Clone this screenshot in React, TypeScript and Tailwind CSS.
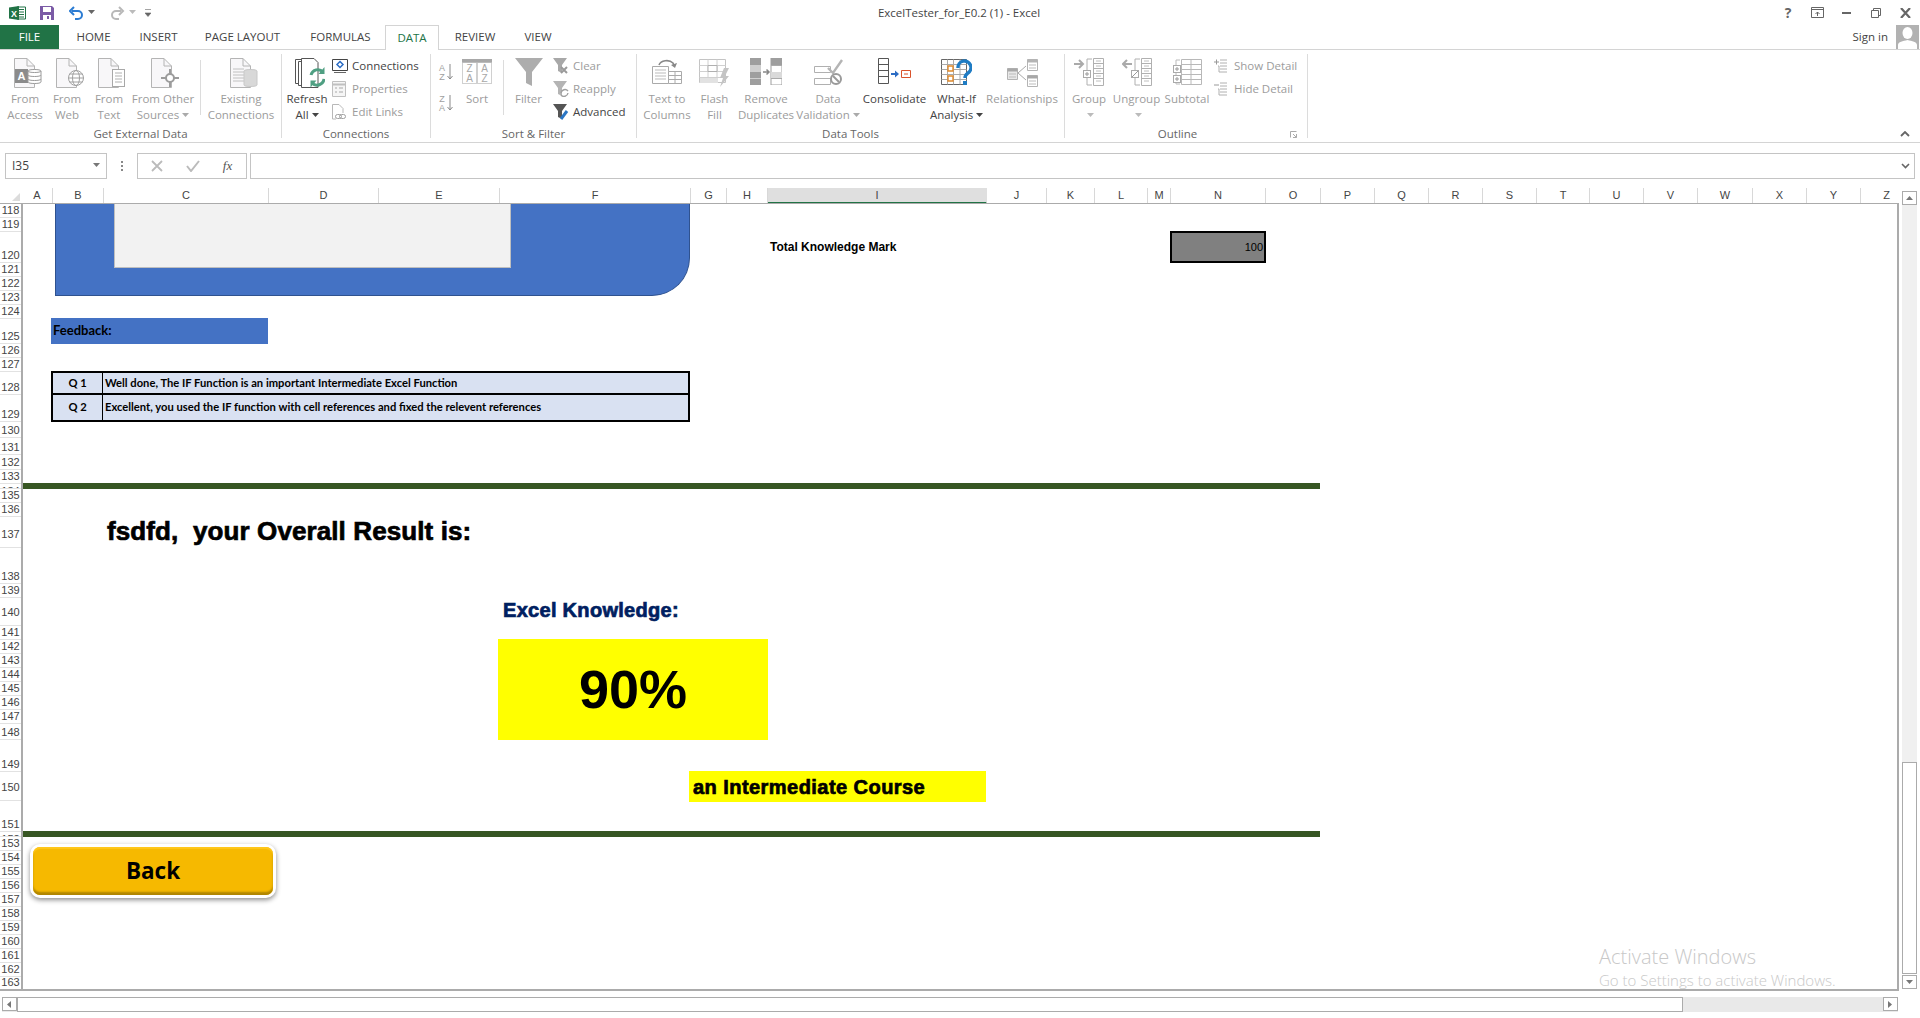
import React from "react";

const ui = "font-['Open_Sans',sans-serif]";
const G = "#b4b4b4";

function Caret({ c = "#8a8a8a" }: { c?: string }) {
  return (
    <svg width="7" height="4" viewBox="0 0 7 4" className="inline-block ml-[3px] mb-[2px]">
      <path d="M0 0h7L3.5 4z" fill={c} />
    </svg>
  );
}

function DocBase({ fill = "#f8f7f9", s = G }: { fill?: string; s?: string }) {
  return (
    <>
      <path d="M.5.5H13L20.5 8V29.5H.5z" fill={fill} stroke={s} />
      <path d="M13 .5V8h7.5" fill="none" stroke={s} />
    </>
  );
}

function FromAccess() {
  return (
    <svg width="28" height="30" viewBox="0 0 28 30" className="ml-[5px]">
      <DocBase />
      <rect x="1" y="11" width="13" height="14" fill="#8b8b8b" />
      <text x="7.5" y="22" textAnchor="middle" fontSize="11" fontWeight="700" fill="#fff" fontFamily="Liberation Sans">A</text>
      <path d="M14 13c0-2 13-2 13 0v11c0 2-13 2-13 0z" fill="#fff" stroke="#9a9a9a" />
      <path d="M14 13c0 2 13 2 13 0M14 17c0 2 13 2 13 0M14 21c0 2 13 2 13 0" fill="none" stroke="#9a9a9a" />
    </svg>
  );
}
function FromWeb() {
  return (
    <svg width="28" height="30" viewBox="0 0 28 30" className="ml-[5px]">
      <DocBase />
      <circle cx="20" cy="20" r="7.5" fill="#fff" stroke="#a0a0a0" />
      <ellipse cx="20" cy="20" rx="3.5" ry="7.5" fill="none" stroke="#a0a0a0" />
      <path d="M12.5 20h15M13.5 16h13M13.5 24h13" stroke="#a0a0a0" fill="none" />
    </svg>
  );
}
function FromText() {
  return (
    <svg width="28" height="30" viewBox="0 0 28 30" className="ml-[5px]">
      <DocBase />
      <rect x="14.5" y="11.5" width="12" height="17" fill="#fff" stroke="#a8a8a8" />
      <path d="M17 15h7M17 18h7M17 21h7M17 24h7" stroke="#b0b0b0" />
    </svg>
  );
}
function FromOther() {
  return (
    <svg width="28" height="30" viewBox="0 0 28 30" className="ml-[4px]">
      <DocBase />
      <circle cx="19" cy="20" r="4" fill="#fff" stroke="#9c9c9c" strokeWidth="2" />
      <path d="M19 11v5M19 24v5M10 20h5M23 20h5" stroke="#9c9c9c" strokeWidth="2" />
    </svg>
  );
}
function Existing() {
  return (
    <svg width="28" height="30" viewBox="0 0 28 30" className="ml-[6px]">
      <DocBase />
      <path d="M3 11h11M3 14h11M3 17h11M3 20h11M3 23h11" stroke="#c0c0c0" />
      <path d="M14 13c0-2 13-2 13 0v14c0 2-13 2-13 0z" fill="#d8d8d8" stroke="#c8c8c8" />
    </svg>
  );
}
function Refresh() {
  return (
    <svg width="30" height="30" viewBox="0 0 30 30" className="ml-[6px]">
      <path d="M.5 1.5h15v24H.5z" fill="#fff" stroke="#555" />
      <path d="M3.5 3.5h15v24h-15z" fill="#fff" stroke="#555" />
      <path d="M6.5.5H19l4 4V29.5H6.5z" fill="#fff" stroke="#555" />
      <path d="M16 17a7 7 0 0 1 12-3" fill="none" stroke="#4f9f82" strokeWidth="3" />
      <path d="M29.5 9v7h-6z" fill="#4f9f82" />
      <path d="M29 21a7 7 0 0 1-12 4" fill="none" stroke="#4f9f82" strokeWidth="3" />
      <path d="M15.5 29.5v-7h6z" fill="#4f9f82" />
    </svg>
  );
}
function ConnIcon() {
  return (
    <svg width="16" height="14" viewBox="0 0 16 14">
      <path d="M.5.5h15v11H.5z" fill="#fff" stroke="#444" />
      <path d="M2 13.5h12" stroke="#666" />
      <path d="M8 2.5l3 3-3 3-3-3z" fill="#fff" stroke="#2b6cc4" strokeWidth="1.5" />
    </svg>
  );
}
function PropIcon() {
  return (
    <svg width="14" height="16" viewBox="0 0 14 16">
      <path d="M.5.5h13v15H.5z" fill="#f6f6f6" stroke="#c0c0c0" />
      <path d="M.5 3.5h13" stroke="#c0c0c0" strokeWidth="2" />
      <path d="M3 7h2M3 11h2M7 7h4M7 11h4" stroke="#a8a8a8" />
    </svg>
  );
}
function LinkIcon() {
  return (
    <svg width="15" height="16" viewBox="0 0 15 16">
      <path d="M.5.5H7l4 4V9M.5.5V15H4" fill="#fff" stroke="#b8b8b8" />
      <rect x="3.5" y="10.5" width="6" height="4" rx="2" fill="none" stroke="#a0a0a0" />
      <rect x="7.5" y="10.5" width="6" height="4" rx="2" fill="none" stroke="#a0a0a0" />
    </svg>
  );
}
function SortSmall({ a, b }: { a: string; b: string }) {
  return (
    <svg width="16" height="18" viewBox="0 0 16 18">
      <text x="4" y="8" textAnchor="middle" fontSize="9" fill="#a0a0a0" fontFamily="Liberation Sans">{a}</text>
      <text x="4" y="17" textAnchor="middle" fontSize="9" fill="#a0a0a0" fontFamily="Liberation Sans">{b}</text>
      <path d="M12 1v15M9.5 13l2.5 3 2.5-3" fill="none" stroke="#8a8a8a" />
    </svg>
  );
}
function SortBig() {
  return (
    <svg width="30" height="25" viewBox="0 0 30 25" className="mt-[1px]">
      <rect width="30" height="25" fill="#d0d0d0" />
      <rect y="0" width="30" height="3.5" fill="#a8a8a8" />
      <rect x="1" y="4" width="13" height="20" fill="#fff" />
      <rect x="16" y="4" width="13" height="20" fill="#fff" />
      <text x="7.5" y="13" textAnchor="middle" fontSize="10" fill="#a8a8a8" fontFamily="Liberation Sans">Z</text>
      <text x="7.5" y="23" textAnchor="middle" fontSize="10" fill="#a8a8a8" fontFamily="Liberation Sans">A</text>
      <text x="22.5" y="13" textAnchor="middle" fontSize="10" fill="#a8a8a8" fontFamily="Liberation Sans">A</text>
      <text x="22.5" y="23" textAnchor="middle" fontSize="10" fill="#a8a8a8" fontFamily="Liberation Sans">Z</text>
    </svg>
  );
}
function Funnel() {
  return (
    <svg width="28" height="28" viewBox="0 0 28 28">
      <path d="M0 0h28L17 14v14l-6-3V14z" fill="#adadad" />
    </svg>
  );
}
function SmallFunnel({ c, kind }: { c: string; kind: string }) {
  return (
    <svg width="16" height="16" viewBox="0 0 16 16">
      <path d="M0 0h14L9 7v8l-4-2V7z" fill={c} />
      {kind === "x" && <path d="M8 9l6 6M14 9l-6 6" stroke="#9a9a9a" strokeWidth="2" />}
      {kind === "r" && <path d="M8 12a4 4 0 0 1 7-2M15 12a4 4 0 0 1-7 2" fill="none" stroke="#a0a0a0" strokeWidth="1.4" />}
      {kind === "p" && <path d="M8 15l6-8" stroke="#2b76c4" strokeWidth="3" />}
    </svg>
  );
}
function TextCols() {
  return (
    <svg width="30" height="26" viewBox="0 0 30 26">
      <path d="M.5 8.5h16v17H.5z" fill="#fff" stroke="#aaa" />
      <path d="M3 12h11M3 15h11M3 18h11M3 21h11" stroke="#bbb" />
      <path d="M16.5 13.5h13v12h-13z" fill="#fff" stroke="#aaa" />
      <path d="M16.5 17.5h13M16.5 21.5h13M23 13.5v12" stroke="#aaa" />
      <path d="M7 7a8 6 0 0 1 14-2l1 3" fill="none" stroke="#888" strokeWidth="1.6" />
      <path d="M19 7l4 3 2-5z" fill="#888" />
    </svg>
  );
}
function Flash() {
  return (
    <svg width="31" height="28" viewBox="0 0 31 28" className="mt-[1px]">
      <path d="M.5.5h26v23H.5z" fill="#fff" stroke="#c4c4c4" />
      <path d="M.5 6.5h26M.5 12.5h26M.5 18.5h26M9 .5v23M18 .5v23" stroke="#d0d0d0" />
      <path d="M9 6.5h9v6H9z" fill="#fff" stroke="#b0b0b0" />
      <path d="M1 19h18v5H1z" fill="#e2e2e2" />
      <path d="M25 9h5l-4 8h4l-9 11 3-9h-3z" fill="#c4c4c4" />
    </svg>
  );
}
function RemoveDup() {
  return (
    <svg width="32" height="27" viewBox="0 0 32 27">
      <rect x="0" y="0" width="11" height="27" fill="#9e9e9e" />
      <path d="M0 7h11v7H0zM0 20h11v1H0z" fill="#cfcfcf" />
      <rect x="21" y="0" width="11" height="27" fill="#fff" stroke="#9e9e9e" />
      <rect x="21" y="0" width="11" height="7" fill="#9e9e9e" />
      <path d="M21 14h11v6H21z" fill="#dadada" />
      <path d="M21 20.5h11M21 7.5h11" stroke="#aaa" />
      <path d="M13 14h6M16.5 11.5L19 14l-2.5 2.5" fill="none" stroke="#888" strokeWidth="1.5" />
    </svg>
  );
}
function Validation() {
  return (
    <svg width="29" height="26" viewBox="0 0 29 26" className="mt-[1px]">
      <path d="M.5 7.5h16v6H.5zM.5 19.5h16v6H.5z" fill="#fff" stroke="#b0b0b0" />
      <path d="M14 9l5 5L28 1" fill="none" stroke="#b4b4b4" strokeWidth="2.4" />
      <circle cx="22" cy="20" r="5" fill="#fff" stroke="#9a9a9a" strokeWidth="2" />
      <path d="M19 17l6 6" stroke="#9a9a9a" strokeWidth="2" />
    </svg>
  );
}
function Consolidate() {
  return (
    <svg width="33" height="26" viewBox="0 0 33 26">
      <path d="M.5.5h10v25H.5zM.5 6.5h10M.5 12.5h10M.5 18.5h10" fill="#fff" stroke="#555" />
      <path d="M13 16h5" stroke="#2b6cc4" strokeWidth="2" />
      <path d="M17 12.5l4 3.5-4 3.5z" fill="#2b6cc4" />
      <path d="M23.5 12.5h9v7h-9z" fill="#fff" stroke="#d9532c" />
      <path d="M26 16h4" stroke="#d9532c" />
    </svg>
  );
}
function WhatIf() {
  return (
    <svg width="31" height="30" viewBox="0 0 31 30" className="mt-[1px]">
      <path d="M.5.5h25v25H.5z" fill="#fff" stroke="#666" />
      <path d="M.5 5.5h25M.5 10.5h25M.5 15.5h25M.5 20.5h25M6.5.5v25M12.5.5v25M19 .5v25" stroke="#aaa" />
      <path d="M7 7h5v5H7zM7 17h5v5H7z" fill="#fff" stroke="#e08a2c" strokeWidth="1.4" />
      <path d="M17 9a6.5 6.5 0 1 1 10 5c-2 1.500-3 2-3 5" fill="none" stroke="#1f7cc4" strokeWidth="3.4" />
      <rect x="22" y="22" width="4" height="4" fill="#1f7cc4" />
    </svg>
  );
}
function Relations() {
  return (
    <svg width="31" height="28" viewBox="0 0 31 28" className="mt-[1px]">
      <path d="M20.500.5h10v11h-10z" fill="#fff" stroke="#b4b4b4" />
      <path d="M20.500.5h10v3h-10z" fill="#b4b4b4" />
      <path d="M22 6h7M22 9h7" stroke="#bbb" />
      <path d="M.5 9.500h10v11H.5z" fill="#e8e8e8" stroke="#b4b4b4" />
      <path d="M.5 9.500h10v3H.5z" fill="#a8a8a8" />
      <path d="M2 15h7M2 18h7" stroke="#bbb" />
      <path d="M20.500 16.500h10v11h-10z" fill="#fff" stroke="#b4b4b4" />
      <path d="M20.500 16.500h10v3h-10z" fill="#a8a8a8" />
      <path d="M22 22h7M22 25h7" stroke="#bbb" />
      <path d="M19 7l-8 7 8 7" fill="none" stroke="#aaa" />
    </svg>
  );
}
function Outline({ kind }: { kind: string }) {
  return (
    <svg width="30" height="28" viewBox="0 0 30 28">
      {kind === "g" && <path d="M0 6h8M5 2l4 4-4 4" fill="none" stroke="#aaa" strokeWidth="2" />}
      {kind === "u" && <path d="M10 6H2M5 2L1 6l4 4" fill="none" stroke="#aaa" strokeWidth="2" />}
      <path d="M18 1h-5v26h5" fill="none" stroke="#b0b0b0" />
      <path d="M19.500.5h10v27h-10zM19.500 5.500h10M19.500 10.500h10M19.500 15.500h10M19.500 20.500h10" fill="#fff" stroke="#b0b0b0" />
      <path d="M22 3h5M22 8h5M22 13h5M22 18h5M22 23h5" stroke="#c0c0c0" />
      <rect x="9.500" y="12.500" width="7" height="7" fill="#fff" stroke="#aaa" />
      {kind === "g" ? <path d="M11 16h4M13 14v4" stroke="#999" /> : <path d="M10 19l6-6" stroke="#999" />}
    </svg>
  );
}
function Subtotal() {
  return (
    <svg width="29" height="26" viewBox="0 0 29 26" className="mt-[1px]">
      <path d="M8.500.5h20v25h-20zM8.500 5.500h20M8.500 10.500h20M8.500 15.500h20M8.500 20.500h20M18 .5v25" fill="#fff" stroke="#b8b8b8" />
      <path d="M7 1H3v24h4" fill="none" stroke="#bbb" />
      <rect x=".5" y="6.500" width="7" height="7" fill="#fff" stroke="#aaa" />
      <rect x=".5" y="16.500" width="7" height="7" fill="#fff" stroke="#aaa" />
      <path d="M2 10h4M4 8v4M2 20h4M4 18v4" stroke="#999" />
    </svg>
  );
}
function DetailIcon({ plus }: { plus: boolean }) {
  return (
    <svg width="14" height="14" viewBox="0 0 14 14">
      {plus ? <path d="M0 3h5M2.500.5v5" stroke="#999" /> : <path d="M0 3h5" stroke="#999" />}
      <path d="M6 1h7M6 4h7M6 7h7M6 10h7M6 13h7" stroke="#b0b0b0" />
      <path d="M4 7h1v6h1" fill="none" stroke="#b0b0b0" />
    </svg>
  );
}

function Big({ w, icon, l1, l2, on, caret, caret2 }: { w: string; icon: React.ReactNode; l1: string; l2?: string; on?: boolean; caret?: boolean; caret2?: boolean }) {
  return (
    <div className={`${w} pt-[4px] flex flex-col items-center shrink-0 ${on ? "text-[#444444]" : "text-[#9c9c9c]"}`}>
      <div className="h-[33px] flex items-start justify-center">{icon}</div>
      <div className="h-[16px] leading-[16px] whitespace-nowrap">{l1}</div>
      <div className="h-[16px] leading-[16px] whitespace-nowrap">
        {l2}
        {caret && <Caret c={on ? "#444444" : "#aaaaaa"} />}
        {caret2 && <Caret c="#bbbbbb" />}
      </div>
    </div>
  );
}

function Small({ icon, label, on }: { icon: React.ReactNode; label: string; on?: boolean }) {
  return (
    <div className={`h-[23px] flex items-center whitespace-nowrap ${on ? "text-[#444444]" : "text-[#9c9c9c]"}`}>
      <div className="w-[20px] h-[18px] flex items-center justify-start shrink-0">{icon}</div>
      {label}
    </div>
  );
}

function Group({ w, label, children, launcher }: { w: string; label: string; children: React.ReactNode; launcher?: boolean }) {
  return (
    <div className={`${w} h-[88px] flex flex-col shrink-0`}>
      <div className="h-[72px] flex">{children}</div>
      <div className="h-[16px] leading-[16px] flex text-[#666666]">
        <div className="flex-1 text-center">{label}</div>
        {launcher && (
          <div className="w-[17px] flex items-center">
            <svg width="7" height="7" viewBox="0 0 7 7"><path d="M.5.5h6M.5.5v6M3 3l3.500 3.500M6.500 3v3.500H3" fill="none" stroke="#aaaaaa" /></svg>
          </div>
        )}
      </div>
    </div>
  );
}

const Sep = () => <div className="self-start h-[84px] w-px bg-[#dcdcdc] shrink-0" />;

function TitleBar() {
  return (
    <div className={`h-[25px] flex items-center relative ${ui}`}>
      <div className="w-[9px]" />
      <svg width="17" height="14" viewBox="0 0 17 14">
        <path d="M8 1h8.500v12H8z" fill="#fff" stroke="#217346" />
        <path d="M10 3.500h5M10 6h5M10 8.500h5M10 11h5" stroke="#217346" />
        <path d="M0 1.500L10 0v14L0 12.500z" fill="#217346" />
        <text x="5" y="10.500" textAnchor="middle" fontSize="9" fontWeight="700" fill="#fff" fontFamily="Liberation Sans">X</text>
      </svg>
      <div className="w-[14px]" />
      <svg width="14" height="14" viewBox="0 0 14 14">
        <path d="M0 0h12l2 2v12H0z" fill="#7b5ba6" />
        <rect x="3" y="1" width="8" height="5" fill="#fff" />
        <rect x="3" y="9" width="8" height="5" fill="#fff" />
        <rect x="7" y="10" width="2" height="3" fill="#7b5ba6" />
      </svg>
      <div className="w-[15px]" />
      <svg width="14" height="14" viewBox="0 0 14 14">
        <path d="M3 5h6a4 4 0 0 1 0 8H6" fill="none" stroke="#2b7cd3" strokeWidth="2" />
        <path d="M5 1L1 5l4 4" fill="none" stroke="#2b7cd3" strokeWidth="2" />
      </svg>
      <div className="w-[2px]" />
      <Caret c="#666666" />
      <div className="w-[15px]" />
      <svg width="15" height="14" viewBox="0 0 15 14">
        <path d="M11 5H6a4 4 0 0 0 0 8h3" fill="none" stroke="#b8b8b8" strokeWidth="2" />
        <path d="M9 1l4 4-4 4" fill="none" stroke="#b8b8b8" strokeWidth="2" />
      </svg>
      <div className="w-[1px]" />
      <Caret c="#bbbbbb" />
      <div className="w-[9px]" />
      <svg width="6" height="8" viewBox="0 0 6 8"><path d="M0 .5h6M0 4h6l-3 3.500L0 4z" fill="#666666" stroke="#666666" strokeWidth=".6" /></svg>
      <div className="absolute left-0 right-[2px] text-center text-[11.5px] text-[#444444] pointer-events-none">ExcelTester_for_E0.2 (1) - Excel</div>
      <div className="ml-auto flex items-center pr-[9px] text-[#666666]">
        <div className="w-[14px] text-center text-[14px] font-bold leading-none">?</div>
        <div className="w-[16px]" />
        <svg width="13" height="11" viewBox="0 0 13 11"><path d="M.5.5h12v10H.5zM.5 2.500h12" fill="none" stroke="#666666" /><path d="M6.500 9V5M4.500 7l2-2 2 2" fill="none" stroke="#666666" /></svg>
        <div className="w-[18px]" />
        <svg width="9" height="3" viewBox="0 0 9 3"><rect width="9" height="2" y="1" fill="#666666" /></svg>
        <div className="w-[20px]" />
        <svg width="10" height="10" viewBox="0 0 10 10"><path d="M.5 2.500h7v7h-7zM2.500 2.500v-2h7v7h-2" fill="none" stroke="#666666" /></svg>
        <div className="w-[19px]" />
        <svg width="11" height="10" viewBox="0 0 11 10"><path d="M1 0l9 10M10 0L1 10" stroke="#666666" strokeWidth="2.200" /></svg>
      </div>
    </div>
  );
}

function Tabs() {
  return (
    <div className={`h-[25px] flex items-stretch text-[11.5px] text-[#444444] border-b border-[#d4d4d4] ${ui}`}>
      <div className="w-[59px] bg-[#217346] text-white flex items-center justify-center">FILE</div>
      <div className="w-[69px] flex items-center justify-center">HOME</div>
      <div className="w-[61px] flex items-center justify-center">INSERT</div>
      <div className="w-[107px] flex items-center justify-center">PAGE LAYOUT</div>
      <div className="w-[89px] flex items-center justify-center">FORMULAS</div>
      <div className="w-[54px] h-[25px] bg-white border border-b-0 border-[#d4d4d4] text-[#217346] flex items-center justify-center">DATA</div>
      <div className="w-[72px] flex items-center justify-center">REVIEW</div>
      <div className="w-[54px] flex items-center justify-center">VIEW</div>
      <div className="ml-auto flex items-center">
        <span className="mr-[8px]">Sign in</span>
        <svg width="23" height="24" viewBox="0 0 23 24" className="mr-[1px]">
          <rect width="23" height="24" fill="#b2b2b2" />
          <ellipse cx="11.500" cy="8" rx="5" ry="6" fill="#fff" />
          <path d="M2 24v-4c0-3 5-4 9.500-5 4.500 1 9.500 2 9.500 5v4z" fill="#fff" />
        </svg>
      </div>
    </div>
  );
}

function Ribbon() {
  return (
    <div className={`h-[93px] pt-[4px] flex text-[11.5px] border-b border-[#d4d4d4] relative ${ui}`}>
      <Group w="w-[281px]" label="Get External Data">
        <Big w="w-[50px]" icon={<FromAccess />} l1="From" l2="Access" />
        <Big w="w-[34px]" icon={<FromWeb />} l1="From" l2="Web" />
        <Big w="w-[50px]" icon={<FromText />} l1="From" l2="Text" />
        <Big w="w-[58px]" icon={<FromOther />} l1="From Other" l2="Sources" caret />
        <div className="w-[8px]" />
        <div className="self-start mt-[6px] h-[55px] w-px bg-[#dcdcdc]" />
        <Big w="w-[80px]" icon={<Existing />} l1="Existing" l2="Connections" />
      </Group>
      <Sep />
      <Group w="w-[148px]" label="Connections">
        <Big w="w-[50px]" on icon={<Refresh />} l1="Refresh" l2="All" caret />
        <div>
          <Small on icon={<ConnIcon />} label="Connections" />
          <Small icon={<PropIcon />} label="Properties" />
          <Small icon={<LinkIcon />} label="Edit Links" />
        </div>
      </Group>
      <Sep />
      <Group w="w-[205px]" label="Sort & Filter">
        <div className="w-[30px] pt-[9px] flex flex-col items-center gap-[13px]">
          <SortSmall a="A" b="Z" />
          <SortSmall a="Z" b="A" />
        </div>
        <Big w="w-[32px]" icon={<SortBig />} l1="Sort" />
        <div className="w-[10px]" />
        <div className="self-start mt-[6px] h-[55px] w-px bg-[#dcdcdc]" />
        <Big w="w-[49px]" icon={<Funnel />} l1="Filter" />
        <div>
          <Small icon={<SmallFunnel c="#a8a8a8" kind="x" />} label="Clear" />
          <Small icon={<SmallFunnel c="#b4b4b4" kind="r" />} label="Reapply" />
          <Small on icon={<SmallFunnel c="#555555" kind="p" />} label="Advanced" />
        </div>
      </Group>
      <Sep />
      <Group w="w-[427px]" label="Data Tools">
        <Big w="w-[60px]" icon={<TextCols />} l1="Text to" l2="Columns" />
        <Big w="w-[35px]" icon={<Flash />} l1="Flash" l2="Fill" />
        <Big w="w-[68px]" icon={<RemoveDup />} l1="Remove" l2="Duplicates" />
        <Big w="w-[56px]" icon={<Validation />} l1="Data" l2="Validation" caret />
        <Big w="w-[77px]" on icon={<Consolidate />} l1="Consolidate" />
        <Big w="w-[47px]" on icon={<WhatIf />} l1="What-If" l2="Analysis" caret />
        <Big w="w-[84px]" icon={<Relations />} l1="Relationships" />
      </Group>
      <Sep />
      <Group w="w-[242px]" label="Outline" launcher>
        <Big w="w-[48px]" icon={<Outline kind="g" />} l1="Group" caret2 />
        <Big w="w-[47px]" icon={<Outline kind="u" />} l1="Ungroup" caret2 />
        <Big w="w-[54px]" icon={<Subtotal />} l1="Subtotal" />
        <div>
          <Small icon={<DetailIcon plus />} label="Show Detail" />
          <Small icon={<DetailIcon plus={false} />} label="Hide Detail" />
        </div>
      </Group>
      <Sep />
      <div className="ml-auto self-end mb-[5px] mr-[10px]">
        <svg width="10" height="6" viewBox="0 0 10 6"><path d="M1 5l4-4 4 4" fill="none" stroke="#666666" strokeWidth="1.800" /></svg>
      </div>
    </div>
  );
}

function FormulaBar() {
  return (
    <div className={`mt-[10px] h-[26px] flex items-stretch text-[12px] text-[#444444] ${ui}`}>
      <div className="ml-[5px] w-[102px] border border-[#c4c4c4] flex items-center pl-[6px] pr-[6px] justify-between">
        <span>I35</span>
        <Caret c="#777777" />
      </div>
      <div className="w-[30px] flex flex-col items-center justify-center gap-[2px]">
        <div className="w-[2px] h-[2px] bg-[#888888]" />
        <div className="w-[2px] h-[2px] bg-[#888888]" />
        <div className="w-[2px] h-[2px] bg-[#888888]" />
      </div>
      <div className="w-[110px] border border-[#c4c4c4] flex items-center">
        <div className="w-[37px] flex justify-center">
          <svg width="12" height="12" viewBox="0 0 12 12"><path d="M1 1l10 10M11 1L1 11" stroke="#bbbbbb" strokeWidth="1.800" /></svg>
        </div>
        <div className="w-[35px] flex justify-center">
          <svg width="14" height="12" viewBox="0 0 14 12"><path d="M1 6l4 5 8-10" fill="none" stroke="#bbbbbb" strokeWidth="2" /></svg>
        </div>
        <div className="w-[35px] text-center font-['Liberation_Serif',serif] italic text-[13px] text-[#555555]">fx</div>
      </div>
      <div className="ml-[3px] w-[1665px] border border-[#c4c4c4] flex items-center justify-end pr-[4px]">
        <svg width="9" height="6" viewBox="0 0 9 6"><path d="M1 1l3.500 3.500L8 1" fill="none" stroke="#666666" strokeWidth="1.600" /></svg>
      </div>
    </div>
  );
}

const cols: [string, string, boolean?][] = [
  ["A", "w-[31px]"], ["B", "w-[51px]"], ["C", "w-[165px]"], ["D", "w-[110px]"], ["E", "w-[121px]"], ["F", "w-[191px]"],
  ["G", "w-[36px]"], ["H", "w-[41px]"], ["I", "w-[219px]", true], ["J", "w-[60px]"], ["K", "w-[48px]"], ["L", "w-[53px]"],
  ["M", "w-[23px]"], ["N", "w-[95px]"], ["O", "w-[55px]"], ["P", "w-[54px]"], ["Q", "w-[54px]"], ["R", "w-[54px]"],
  ["S", "w-[54px]"], ["T", "w-[53px]"], ["U", "w-[54px]"], ["V", "w-[54px]"], ["W", "w-[55px]"], ["X", "w-[54px]"],
  ["Y", "w-[54px]"], ["Z", "w-[52px]"],
];

const rows: [number, string, string?][] = [
  [118, "h-[14px]"], [119, "h-[14px]"], [120, "h-[31px]"], [121, "h-[14px]"], [122, "h-[14px]"], [123, "h-[14px]"], [124, "h-[14px]"],
  [125, "h-[25px]"], [126, "h-[14px]"], [127, "h-[14px]"], [128, "h-[23px]"], [129, "h-[27px]"], [130, "h-[16px]"], [131, "h-[17px]"],
  [132, "h-[15px]"], [133, "h-[14px]"], [134, "h-[5px]", "t"], [135, "h-[14px]"], [136, "h-[14px]"], [137, "h-[31px]", "pb-[6px]"],
  [138, "h-[36px]"], [139, "h-[14px]"], [140, "h-[28px]", "pb-[6px]"], [141, "h-[14px]"], [142, "h-[14px]"], [143, "h-[14px]"],
  [144, "h-[14px]"], [145, "h-[14px]"], [146, "h-[14px]"], [147, "h-[14px]"], [148, "h-[16px]"], [149, "h-[32px]"], [150, "h-[29px]", "pb-[6px]"],
  [151, "h-[31px]"], [152, "h-[5px]", "t"], [153, "h-[14px]"], [154, "h-[14px]"], [155, "h-[14px]"], [156, "h-[14px]"], [157, "h-[14px]"],
  [158, "h-[14px]"], [159, "h-[14px]"], [160, "h-[14px]"], [161, "h-[14px]"], [162, "h-[14px]"], [163, "h-[13px]"],
];

function ColHeader() {
  return (
    <div className="h-[16px] flex font-['Liberation_Sans',sans-serif] text-[11px] text-[#444444] border-b border-[#ababab] overflow-hidden">
      <div className="w-[22px] shrink-0 flex items-end justify-end pr-[2px] pb-[2px]">
        <svg width="8" height="8" viewBox="0 0 8 8"><path d="M8 0v8H0z" fill="#dcdcdc" /></svg>
      </div>
      {cols.map(([c, w, sel]) => (
        <div key={c} className={`${w} shrink-0 h-[15px] flex items-center justify-center border-r ${sel ? "bg-[#dfdfdf] border-[#dfdfdf] border-b-2 border-b-[#217346] h-[16px]" : "border-[#d8d8d8]"}`}>
          {c}
        </div>
      ))}
    </div>
  );
}

function RowHeader() {
  return (
    <div className="w-[23px] shrink-0 border-r-2 border-[#ababab] font-['Liberation_Sans',sans-serif] text-[11px] leading-[14px] text-[#444444] overflow-hidden">
      {rows.map(([n, h, mode]) => (
        <div key={n} className={`${h} flex justify-center overflow-hidden border-b border-[#e2e2e2] ${mode === "t" ? "items-start" : "items-end"} ${mode && mode !== "t" ? mode : ""}`}>
          {n}
        </div>
      ))}
    </div>
  );
}

function Canvas() {
  const black = "font-['Liberation_Sans',sans-serif] font-bold [-webkit-text-stroke:0.7px_currentColor]";
  return (
    <div className="flex-1 relative overflow-hidden">
      <div className="h-[279px] flex">
        <div className="w-[667px] shrink-0">
          <div className="ml-[32px] w-[635px] h-[92px] bg-[#4472c4] border-b border-l border-r border-[#2f528f] rounded-br-[38px]">
            <div className="ml-[58px] w-[397px] h-[64px] bg-[#f2f2f2] border-x border-b border-[#bfbfbf]" />
          </div>
          <div className="mt-[22px] ml-[28px] w-[217px] h-[26px] bg-[#4472c4] pl-[2px] flex items-center font-['Lato',sans-serif] font-bold text-[13px] text-black">
            Feedback:
          </div>
          <div className="mt-[27px] ml-[28px] w-[639px] h-[51px] border-2 border-black bg-[#d9e1f2] font-['Lato',sans-serif] font-bold text-[11.2px] text-black flex flex-col">
            <div className="flex h-[22px] border-b-2 border-black">
              <div className="w-[50px] border-r border-black flex items-center justify-center">Q 1</div>
              <div className="pl-[2px] flex items-center">Well done, The IF Function is an important Intermediate Excel Function</div>
            </div>
            <div className="flex flex-1">
              <div className="w-[50px] border-r border-black flex items-center justify-center">Q 2</div>
              <div className="pl-[2px] flex items-center">Excellent, you used the IF function with cell references and fixed the relevent references</div>
            </div>
          </div>
        </div>
        <div className="ml-[80px] mt-[27px] h-[32px] flex items-center">
          <div className="w-[400px] font-['Liberation_Sans',sans-serif] font-bold text-[12px] text-black">Total Knowledge Mark</div>
          <div className="w-[96px] h-[32px] bg-[#808080] border-2 border-black flex items-center justify-end pr-[1px] font-['Liberation_Sans',sans-serif] text-[11px] text-black">100</div>
        </div>
      </div>
      <div className="h-[6px] w-[1297px] bg-[#375623]" />
      <div className="h-[342px] flex flex-col">
        <div className={`mt-[28px] ml-[84px] h-[28px] leading-[28px] text-[26px] tracking-[0.1px] text-black whitespace-pre ${black}`}>fsdfd,  your Overall Result is:</div>
        <div className={`mt-[54px] ml-[480px] h-[22px] leading-[22px] text-[20px] tracking-[0.3px] text-[#002060] ${black}`}>Excel Knowledge:</div>
        <div className="mt-[18px] ml-[475px] w-[270px] h-[101px] bg-[#ffff00] flex items-center justify-center font-['Liberation_Sans',sans-serif] font-bold text-[54px] text-black">90%</div>
        <div className={`mt-[31px] ml-[666px] w-[297px] h-[31px] bg-[#ffff00] pl-[4px] flex items-center text-[20px] tracking-[0.45px] text-black ${black}`}>an Intermediate Course</div>
      </div>
      <div className="h-[6px] w-[1297px] bg-[#375623]" />
      <div className="mt-[7px] ml-[7px] w-[246px] h-[54px] p-[3px] bg-white rounded-[10px] shadow-[0_2px_5px_rgba(0,0,0,0.45)]">
        <div className="h-full rounded-[7px] bg-[#f6b900] shadow-[inset_0_2px_1px_#ffc71a,inset_0_-3px_2px_#b08500] flex items-center justify-center font-['Open_Sans',sans-serif] font-bold text-[22.5px] text-black">Back</div>
      </div>
      <div className="absolute left-[1576px] top-[741px] text-[#c8c8c8] font-['Open_Sans',sans-serif]">
        <div className="text-[20px] leading-[24px] font-light">Activate Windows</div>
        <div className="text-[15px] leading-[22px] font-light whitespace-nowrap">Go to Settings to activate Windows.</div>
      </div>
    </div>
  );
}

function SBtn({ dir }: { dir: "u" | "d" | "l" | "r" }) {
  const p = dir === "u" ? "M1 6h7L4.500 2z" : dir === "d" ? "M1 2h7L4.500 6z" : dir === "l" ? "M6 1v7L2 4.500z" : "M2 1v7l4-3.500z";
  return (
    <div className="w-[15px] h-[14px] bg-white border border-[#ababab] flex items-center justify-center shrink-0">
      <svg width="9" height="9" viewBox="0 0 9 9"><path d={p} fill="#777777" /></svg>
    </div>
  );
}

export default function App() {
  return (
    <div className="w-[1920px] h-[1018px] bg-white overflow-hidden">
      <TitleBar />
      <Tabs />
      <Ribbon />
      <FormulaBar />
      <div className="mt-[9px] flex">
        <div className="w-[1899px] shrink-0">
          <ColHeader />
          <div className="h-[787px] flex border-b-2 border-r-2 border-[#ababab]">
            <RowHeader />
            <Canvas />
          </div>
        </div>
        <div className="ml-[3px] pt-[3px] w-[15px] flex flex-col h-[802px]">
          <SBtn dir="u" />
          <div className="h-[557px] bg-[#f0f0f0]" />
          <div className="h-[212px] bg-white border border-[#ababab]" />
          <div className="h-[1px]" />
          <SBtn dir="d" />
        </div>
      </div>
      <div className="mt-[6px] ml-[2px] w-[1896px] h-[15px] flex bg-[#e9e9e9]">
        <SBtn dir="l" />
        <div className="w-[1666px] bg-white border border-[#ababab]" />
        <div className="ml-auto"><SBtn dir="r" /></div>
      </div>
    </div>
  );
}
